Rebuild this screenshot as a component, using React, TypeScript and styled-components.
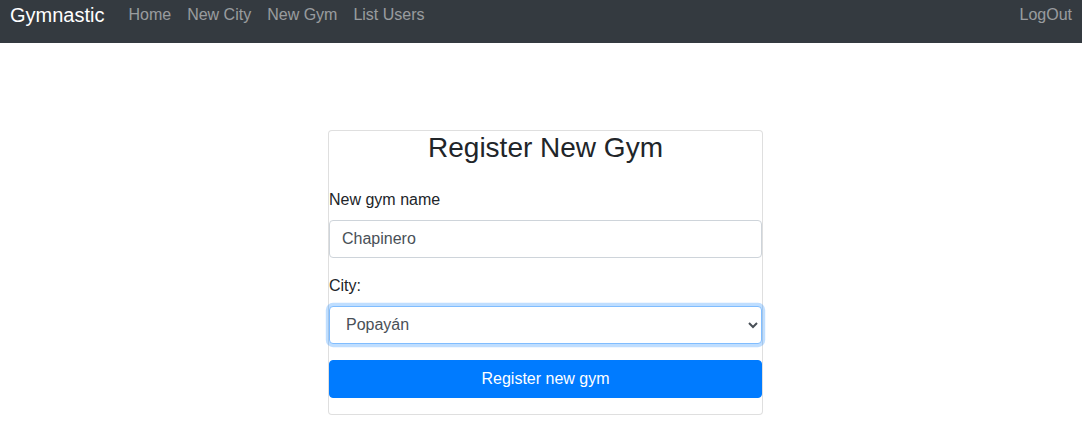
import React from "react";
import styled, { createGlobalStyle } from "styled-components";

const Global = createGlobalStyle`
  * { box-sizing: border-box; }
  html, body { margin: 0; padding: 0; background: #fff; }
  body {
    font-family: "Liberation Sans", Arial, sans-serif;
    font-size: 16px;
    line-height: 1.5;
    color: #212529;
  }
`;

const Navbar = styled.nav`
  display: flex;
  align-items: flex-start;
  height: 43px;
  padding: 0 2px 0 10px;
  background: #343a40;
`;

const Brand = styled.a`
  font-size: 20px;
  line-height: 30px;
  color: #fff;
  margin-right: 16px;
  text-decoration: none;
  white-space: nowrap;
`;

const NavList = styled.div`
  display: flex;
  flex: 1;
`;

const NavLink = styled.a`
  display: block;
  padding: 3px 8px 0;
  line-height: 24px;
  color: rgba(255, 255, 255, 0.5);
  text-decoration: none;
  white-space: nowrap;
`;

const Main = styled.main`
  padding: 87px 0 0 328px;
`;

const Card = styled.div`
  width: 435px;
  border: 1px solid rgba(0, 0, 0, 0.125);
  border-radius: 4px;
  background: #fff;
`;

const Title = styled.h3`
  margin: 0 0 23.4px;
  font-size: 28px;
  font-weight: 500;
  line-height: 1.2;
  text-align: center;
  color: #212529;
`;

const Form = styled.form`
  display: flex;
  flex-direction: column;
`;

const Group = styled.div`
  margin-bottom: 16px;
`;

const Label = styled.label`
  display: block;
  margin-bottom: 8px;
`;

const fieldCss = `
  display: block;
  width: 100%;
  height: 38px;
  padding: 6px 12px;
  font-family: "Liberation Sans", Arial, sans-serif;
  font-size: 16px;
  line-height: 1.5;
  color: #495057;
  background: #fff;
  border: 1px solid #ced4da;
  border-radius: 4px;
  outline: none;
`;

const Input = styled.input`
  ${fieldCss}
`;

const Select = styled.select<{ $focused?: boolean }>`
  ${fieldCss}
  ${(p) =>
    p.$focused
      ? `border-color: #80bdff; box-shadow: 0 0 0 3.2px rgba(0, 123, 255, 0.25);`
      : ""}
`;

const Button = styled.button`
  display: block;
  width: 100%;
  height: 38px;
  margin-bottom: 16px;
  padding: 6px 12px;
  font-family: "Liberation Sans", Arial, sans-serif;
  font-size: 16px;
  line-height: 1.5;
  color: #fff;
  background: #007bff;
  border: 1px solid #007bff;
  border-radius: 4px;
  cursor: pointer;
`;

export default function App() {
  return (
    <>
      <Global />
      <Navbar>
        <Brand href="#">Gymnastic</Brand>
        <NavList>
          <NavLink href="#">Home</NavLink>
          <NavLink href="#">New City</NavLink>
          <NavLink href="#">New Gym</NavLink>
          <NavLink href="#">List Users</NavLink>
        </NavList>
        <NavLink href="#">LogOut</NavLink>
      </Navbar>
      <Main>
        <Card>
          <Title>Register New Gym</Title>
          <Form onSubmit={(e) => e.preventDefault()}>
            <Group>
              <Label htmlFor="gym">New gym name</Label>
              <Input id="gym" defaultValue="Chapinero" />
            </Group>
            <Group>
              <Label htmlFor="city">City:</Label>
              <Select id="city" $focused defaultValue="Popayán">
                <option>Bogotá</option>
                <option>Medellín</option>
                <option>Popayán</option>
                <option>Cali</option>
              </Select>
            </Group>
            <Button type="submit">Register new gym</Button>
          </Form>
        </Card>
      </Main>
    </>
  );
}
